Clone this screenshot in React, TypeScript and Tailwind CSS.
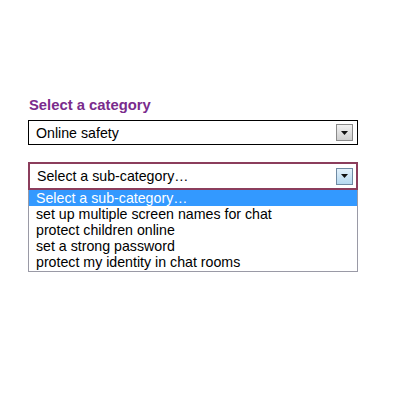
import React from "react";

function Arrow({ blue }: { blue?: boolean }) {
  return (
    <div
      className={
        "flex h-[17px] w-[17px] items-center justify-center border " +
        (blue
          ? "border-[#6f8aa3] bg-gradient-to-b from-[#e3f1fb] to-[#b5d8ef]"
          : "border-[#8a8a8a] bg-gradient-to-b from-[#f2f2f2] to-[#cfcfcf]")
      }
    >
      <svg width="7" height="4" viewBox="0 0 7 4">
        <path d="M0 0 H7 L3.5 4 Z" fill="#111" />
      </svg>
    </div>
  );
}

export default function App() {
  const items = [
    "Select a sub-category…",
    "set up multiple screen names for chat",
    "protect children online",
    "set a strong password",
    "protect my identity in chat rooms",
  ];
  return (
    <div
      className="h-[400px] w-[400px] bg-white"
      style={{ fontFamily: '"Liberation Sans", Arial, sans-serif' }}
    >
      <div className="w-[330px] pl-[28px] pt-[96px]">
        <div className="pl-[1px] text-[14.8px] font-bold leading-[18px] text-[#7a2b8c]">
          Select a category
        </div>
        <div className="mt-[6px] flex h-[25px] w-[330px] items-center justify-between border border-black pl-[7px] pr-[4px]">
          <span className="text-[14.2px] leading-[16px] text-black">Online safety</span>
          <Arrow />
        </div>
        <div className="mt-[17px] flex h-[28px] w-[330px] items-center justify-between border-2 border-[#8b3d5c] pl-[7px] pr-[3px]">
          <span className="text-[14.2px] leading-[16px] text-black">Select a sub-category…</span>
          <Arrow blue />
        </div>
        <div className="w-[330px] border border-t-0 border-[#9a9aa6] pb-[1px]">
          {items.map((t, i) => (
            <div
              key={i}
              className={
                "h-[16px] pl-[7px] text-[14.2px] leading-[16px] " +
                (i === 0 ? "bg-[#3399ff] text-white" : "text-black")
              }
            >
              {t}
            </div>
          ))}
        </div>
      </div>
    </div>
  );
}
